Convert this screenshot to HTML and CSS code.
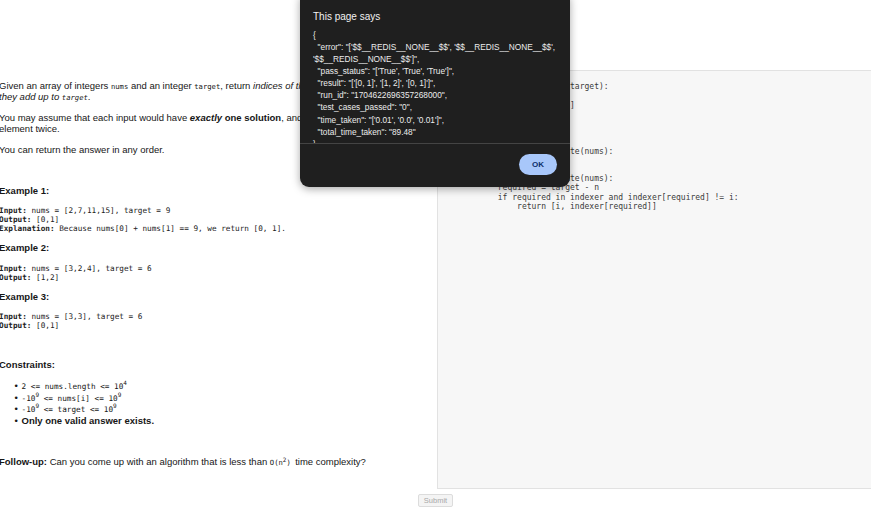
FILE: index.html
```html
<!DOCTYPE html>
<html lang="en">
<head>
<meta charset="utf-8">
<title>Two Sum</title>
<link rel="stylesheet" href="styles.css">
</head>
<body>
<div class="page">
  <div class="main">
    <section class="desc">
      <p>Given an array of integers <code>nums</code>&nbsp;and an integer <code>target</code>, return <em>indices of the two numbers such that they add up to <code>target</code></em>.</p>
      <p>You may assume that each input would have <strong><em>exactly</em> one solution</strong>, and you may not use the <em>same</em> element twice.</p>
      <p>You can return the answer in any order.</p>
      <p>&nbsp;</p>
      <p><strong>Example 1:</strong></p>
<pre class="ex"><strong>Input:</strong> nums = [2,7,11,15], target = 9
<strong>Output:</strong> [0,1]
<strong>Explanation:</strong> Because nums[0] + nums[1] == 9, we return [0, 1].</pre>
      <p><strong>Example 2:</strong></p>
<pre class="ex"><strong>Input:</strong> nums = [3,2,4], target = 6
<strong>Output:</strong> [1,2]</pre>
      <p><strong>Example 3:</strong></p>
<pre class="ex"><strong>Input:</strong> nums = [3,3], target = 6
<strong>Output:</strong> [0,1]</pre>
      <p>&nbsp;</p>
      <p><strong>Constraints:</strong></p>
      <ul class="cons">
        <li><code>2 &lt;= nums.length &lt;= 10<sup>4</sup></code></li>
        <li><code>-10<sup>9</sup> &lt;= nums[i] &lt;= 10<sup>9</sup></code></li>
        <li><code>-10<sup>9</sup> &lt;= target &lt;= 10<sup>9</sup></code></li>
        <li><strong>Only one valid answer exists.</strong></li>
      </ul>
      <p>&nbsp;</p>
      <p><strong>Follow-up:&nbsp;</strong>Can you come up with an algorithm that is less than&nbsp;<code>O(n<sup>2</sup>)&nbsp;</code>time complexity?</p>
    </section>
    <div class="editor-col">
      <div class="editor">
<pre class="code">class Solution:
    def twoSum(self, nums, target):
        indexer = {}
        result = [0, target]

        # build the index


        for i, n in enumerate(nums):
            indexer[n] = i

        for i, n in enumerate(nums):
            required = target - n
            if required in indexer and indexer[required] != i:
                return [i, indexer[required]]</pre>
      </div>
    </div>
  </div>
  <div class="actions">
    <button class="submit" type="button" disabled>Submit</button>
  </div>
</div>

<div class="dialog" role="alertdialog">
  <div class="dialog-title">This page says</div>
  <div class="dialog-body">
<pre class="dialog-msg">{
  "error": "['$$__REDIS__NONE__$$', '$$__REDIS__NONE__$$',
'$$__REDIS__NONE__$$']",
  "pass_status": "['True', 'True', 'True']",
  "result": "['[0, 1]', '[1, 2]', '[0, 1]']",
  "run_id": "1704622696357268000",
  "test_cases_passed": "0",
  "time_taken": "['0.01', '0.0', '0.01']",
  "total_time_taken": "89.48"
}</pre>
  </div>
  <div class="dialog-foot">
    <button class="ok" type="button">OK</button>
  </div>
</div>
</body>
</html>
```

FILE: styles.css
```css
html, body {
  margin: 0;
  padding: 0;
  background: #ffffff;
}

body {
  width: 871px;
  height: 512px;
  overflow: hidden;
  position: relative;
  font-family: "Liberation Sans", Arial, sans-serif;
  color: #161616;
}

.page {
  display: flex;
  flex-direction: column;
}

.main {
  display: flex;
  align-items: flex-start;
  padding-top: 70px;
}

/* ---------- description ---------- */
.desc {
  width: 424px;
  flex: none;
  margin-left: -1px;
  padding-top: 9.5px;
  font-size: 9.5px;
  line-height: 11.7px;
}

.desc p {
  margin: 0 0 8.8px 0;
}

.desc code {
  font-family: "DejaVu Sans Mono", "Liberation Mono", monospace;
  font-size: 7.2px;
  line-height: 0;
}

.desc sup {
  font-size: 6px;
  line-height: 0;
}

.desc pre.ex {
  margin: 9.8px 0 8.8px 0;
  font-family: "DejaVu Sans Mono", "Liberation Mono", monospace;
  font-size: 7.7px;
  line-height: 9px;
  color: #222;
}

.cons {
  margin: 0 0 8.8px 0;
  padding-left: 23px;
  list-style: none;
}

.cons li {
  line-height: 11.7px;
}

.cons li::before {
  content: "\2022";
  display: inline-block;
  width: 7px;
  margin-left: -7.5px;
  font-family: "Liberation Sans", Arial, sans-serif;
  font-size: 9.5px;
  font-weight: normal;
}

.cons code {
  font-size: 7.7px;
}

/* ---------- editor ---------- */
.editor-col {
  flex: 1;
  margin-left: 14px;
  margin-right: -12px;
}

.editor {
  height: 415px;
  border: 1px solid #e2e2e2;
  background: #f7f7f7;
  padding: 2px 2px 0 2px;
  box-sizing: content-box;
}

.code {
  margin: 0;
  font-family: "DejaVu Sans Mono", "Liberation Mono", monospace;
  font-size: 8px;
  line-height: 9.2px;
  color: #3a3a3a;
}

/* ---------- submit ---------- */
.actions {
  display: flex;
  justify-content: center;
  padding-top: 5px;
}

.submit {
  width: 35px;
  height: 13px;
  padding: 0;
  font-family: "Liberation Sans", Arial, sans-serif;
  font-size: 7.5px;
  color: #a8a8a8;
  background: #f4f4f4;
  border: 1px solid #dcdcdc;
  border-radius: 2px;
}

/* ---------- alert dialog ---------- */
.dialog {
  position: absolute;
  left: 300px;
  top: -8px;
  width: 270px;
  height: 195px;
  background: #1f1f1f;
  border-radius: 9px;
  box-shadow: 0 2px 8px rgba(0, 0, 0, 0.35);
  display: flex;
  flex-direction: column;
  color: #e8e8e8;
  font-family: "Liberation Sans", Arial, sans-serif;
}

.dialog-title {
  padding: 17px 13px 0 13px;
  font-size: 10px;
  line-height: 16px;
  color: #f2f2f2;
}

.dialog-body {
  height: 114px;
  overflow: hidden;
  padding: 4px 13px 0 13px;
  border-bottom: 1px solid #444;
}

.dialog-msg {
  margin: 0;
  font-family: "Liberation Sans", Arial, sans-serif;
  font-size: 8.3px;
  line-height: 12.08px;
  color: #ececec;
  white-space: pre;
}

.dialog-foot {
  display: flex;
  justify-content: flex-end;
  padding: 9.5px 13px 0 13px;
}

.ok {
  width: 38px;
  height: 21px;
  border: none;
  border-radius: 11px;
  background: #a8c7fa;
  color: #0b2f6b;
  font-family: "Liberation Sans", Arial, sans-serif;
  font-size: 8px;
  font-weight: bold;
  padding: 0;
}
```
